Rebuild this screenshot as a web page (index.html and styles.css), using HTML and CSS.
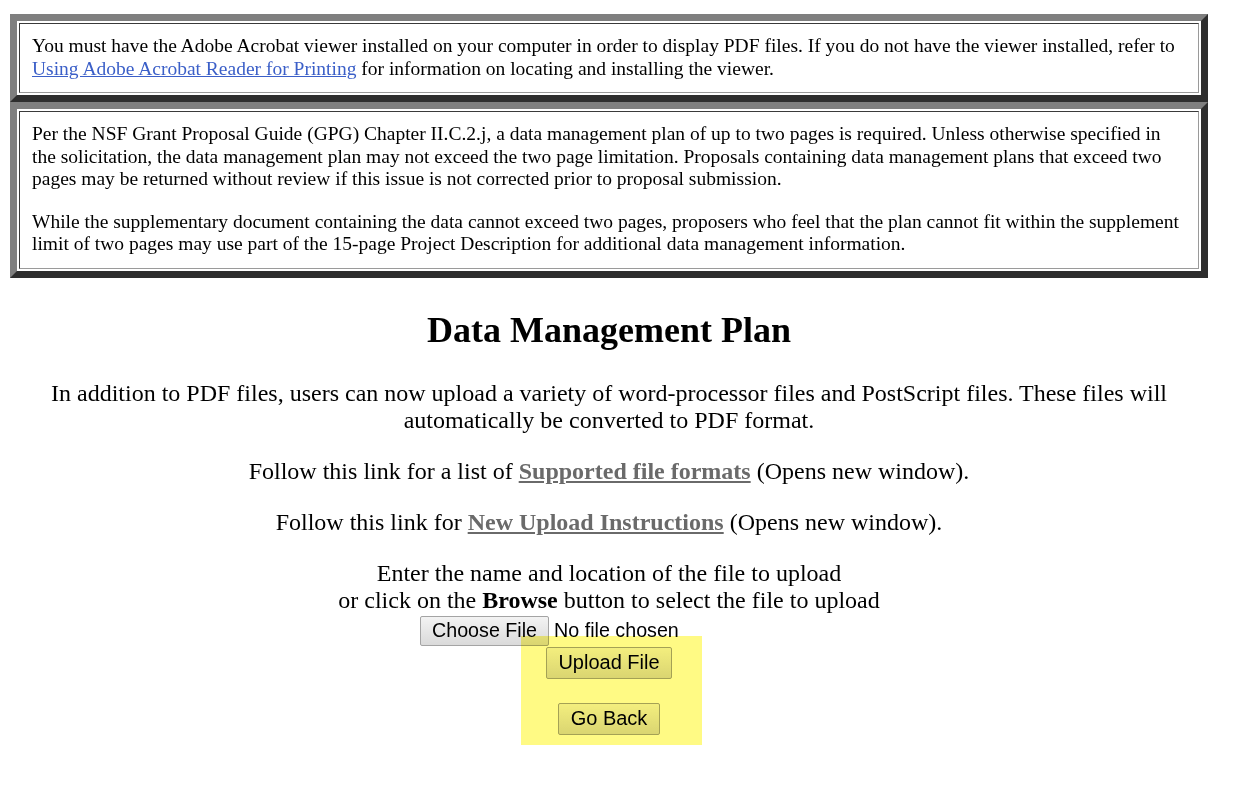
FILE: index.html
```html
<!DOCTYPE html>
<html>
<head>
<meta charset="utf-8">
<link rel="stylesheet" href="styles.css">
</head>
<body>
<div class="page">
  <div class="notice notice-first">
    <div class="cell">
      You must have the Adobe Acrobat viewer installed on your computer in order to display PDF files. If you do not have the viewer installed, refer to <a class="blue" href="#">Using Adobe Acrobat Reader for Printing</a> for information on locating and installing the viewer.
    </div>
  </div>
  <div class="notice">
    <div class="cell">
      <p>Per the NSF Grant Proposal Guide (GPG) Chapter II.C.2.j, a data management plan of up to two pages is required. Unless otherwise specified in the solicitation, the data management plan may not exceed the two page limitation. Proposals containing data management plans that exceed two pages may be returned without review if this issue is not corrected prior to proposal submission.</p>
      <p>While the supplementary document containing the data cannot exceed two pages, proposers who feel that the plan cannot fit within the supplement limit of two pages may use part of the 15-page Project Description for additional data management information.</p>
    </div>
  </div>

  <div class="main">
    <h1>Data Management Plan</h1>
    <p>In addition to PDF files, users can now upload a variety of word-processor files and PostScript files. These files will automatically be converted to PDF format.</p>
    <p>Follow this link for a list of <a class="gray" href="#">Supported file formats</a> (Opens new window).</p>
    <p>Follow this link for <a class="gray" href="#">New Upload Instructions</a> (Opens new window).</p>
    <p class="tight">Enter the name and location of the file to upload<br>or click on the <b>Browse</b> button to select the file to upload</p>
    <div class="filerow"><div class="fileinput"><span class="btn choose">Choose File</span><span class="nofile">No file chosen</span></div></div>
    <div class="btnrow"><span class="btn upload">Upload File</span></div>
    <div class="btnrow back"><span class="btn goback">Go Back</span></div>
    <div class="highlight"></div>
  </div>
</div>
</body>
</html>
```
FILE: styles.css
```css
html, body {
  margin: 0;
  padding: 0;
  background: #ffffff;
}
body {
  font-family: "Liberation Serif", "Times New Roman", serif;
  color: #000;
  min-height: 785px;
}
.page {
  width: 1218px;
  padding-top: 14px;
  padding-bottom: 40px;
}
.notice {
  margin: 0 10px;
  border-style: solid;
  border-width: 7px;
  border-color: #7f7f7f #2e2e2e #2e2e2e #7f7f7f;
  padding: 2px;
}
.cell {
  border: 1px solid;
  border-color: #3a3a3a #9a9a9a #9a9a9a #3a3a3a;
  padding: 11px 12px 12px 12px;
  font-size: 19.5px;
  line-height: 22.5px;
}
.cell p {
  margin: 0 0 20px 0;
}
.cell p:last-child {
  margin-bottom: 0;
}
a.blue {
  color: #3b5fc8;
  text-decoration: underline;
}
a.gray {
  color: #6a6a6a;
  font-weight: bold;
  text-decoration: underline;
}
.main {
  position: relative;
  text-align: center;
  padding-top: 32px;
}
.main h1 {
  font-size: 36px;
  line-height: 40px;
  margin: 0 0 30px 0;
  font-weight: bold;
}
.main p {
  font-size: 24px;
  line-height: 27px;
  margin: 0 20px 24px 20px;
}
.main p.tight {
  margin-bottom: 0;
}
.filerow {
  display: flex;
  justify-content: center;
  margin-top: 2px;
}
.fileinput {
  width: 378px;
  display: flex;
  align-items: center;
  font-family: "Liberation Sans", Arial, sans-serif;
  font-size: 19.7px;
}
.btn {
  display: inline-block;
  font-family: "Liberation Sans", Arial, sans-serif;
  font-size: 20px;
  line-height: 23px;
  padding: 3px 11px 4px 11px;
  border: 1px solid #a4a4a4;
  border-radius: 2px;
  background: linear-gradient(#f3f3f3, #dadada);
  color: #000;
}
.choose {
  font-size: 19.7px;
  padding: 2px 11px 3px 11px;
}
.goback {
  padding-left: 12px;
  padding-right: 12px;
}
.nofile {
  margin-left: 5px;
}
.btnrow {
  display: flex;
  justify-content: center;
  margin-top: 1px;
}
.btnrow.back {
  margin-top: 24px;
}
.highlight {
  position: absolute;
  left: 521px;
  top: 358px;
  width: 181px;
  height: 109px;
  background: #fffa84;
  mix-blend-mode: multiply;
  pointer-events: none;
}
```
